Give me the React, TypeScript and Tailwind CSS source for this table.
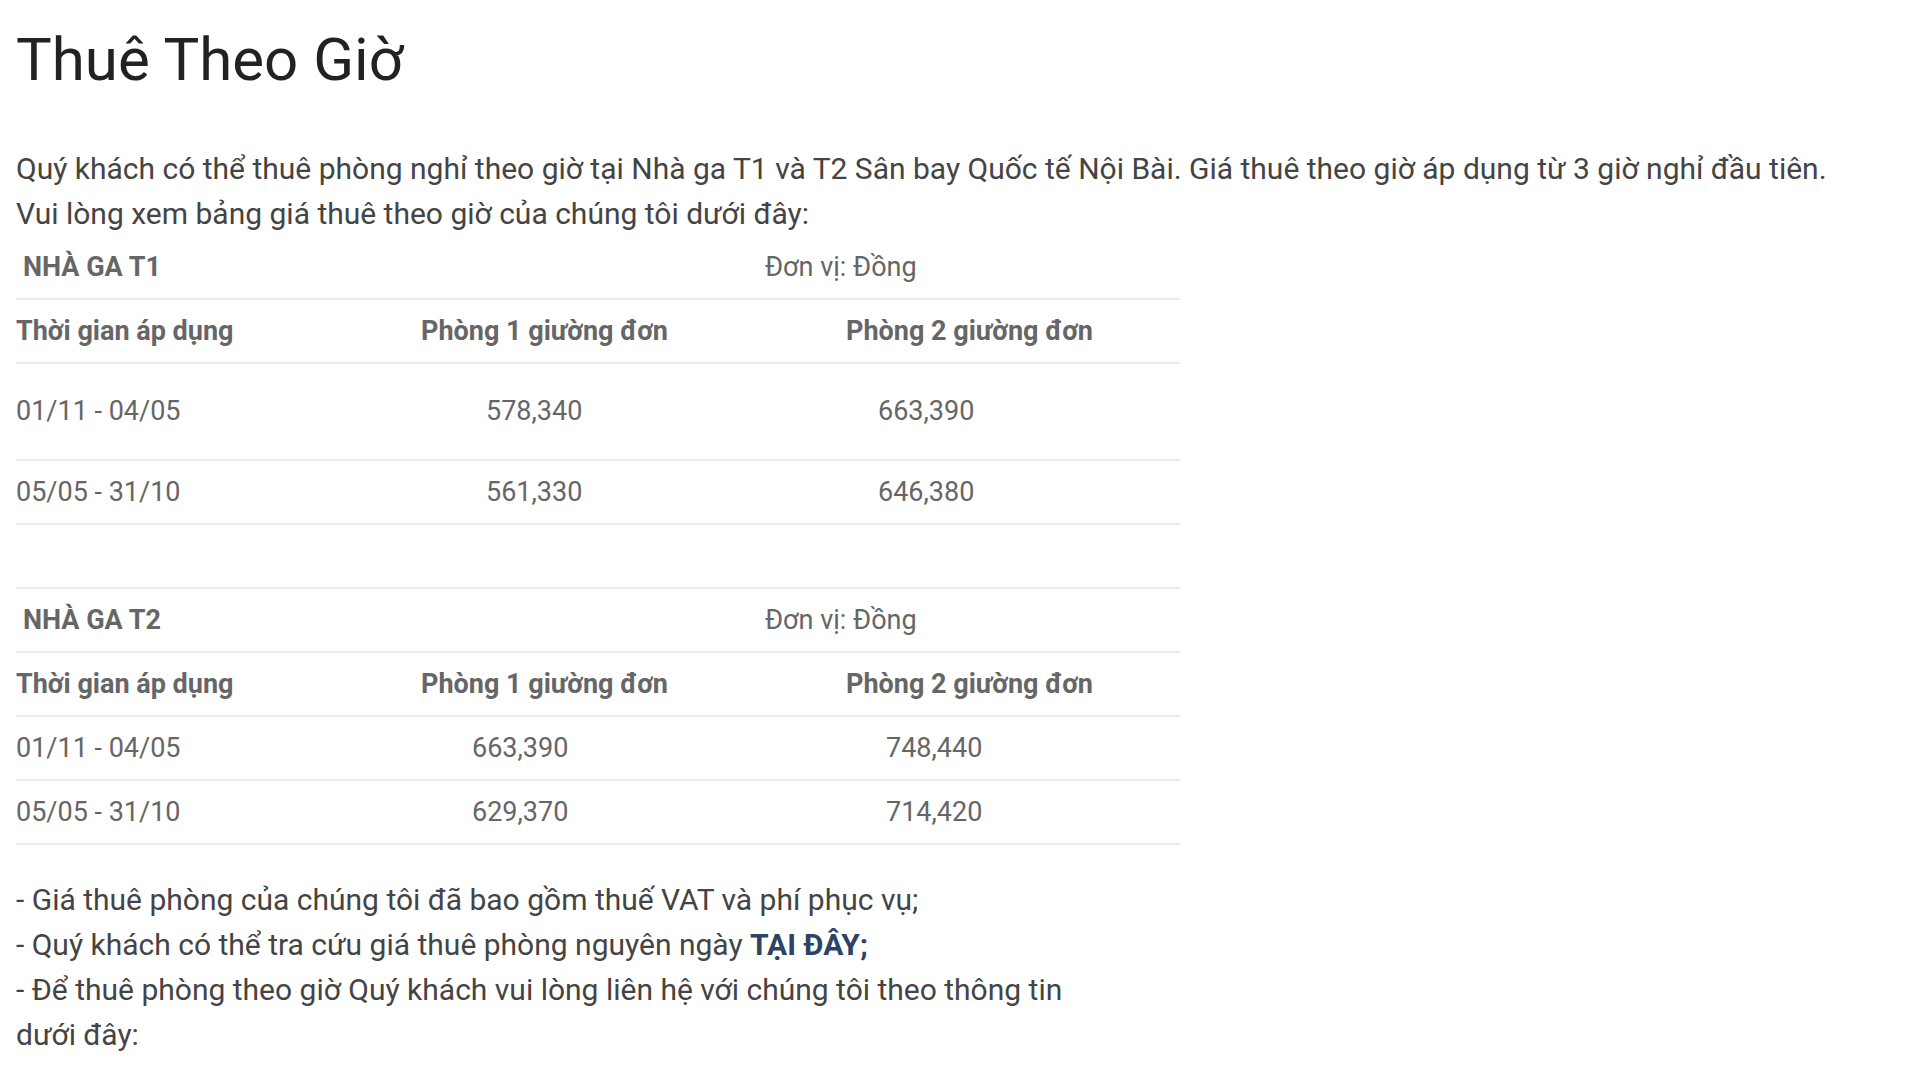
const rowLine = 'border-b-2 border-[#ebebeb]'

type PriceRow = {
  period: string
  single: string
  double: string
  singlePad: string
  doublePad: string
  height: string
}

const t1Rows: PriceRow[] = [
  { period: '01/11 - 04/05', single: '578,340', double: '663,390', singlePad: 'pl-[65px]', doublePad: 'pl-[32px]', height: 'h-[97px]' },
  { period: '05/05 - 31/10', single: '561,330', double: '646,380', singlePad: 'pl-[65px]', doublePad: 'pl-[32px]', height: 'h-[64px]' },
]

const t2Rows: PriceRow[] = [
  { period: '01/11 - 04/05', single: '663,390', double: '748,440', singlePad: 'pl-[51px]', doublePad: 'pl-[40px]', height: 'h-[64px]' },
  { period: '05/05 - 31/10', single: '629,370', double: '714,420', singlePad: 'pl-[51px]', doublePad: 'pl-[40px]', height: 'h-[64px]' },
]

function StationTable({ name, rows, spacer }: { name: string; rows: PriceRow[]; spacer?: boolean }) {
  return (
    <div className="w-[1164px] text-[27px] text-[#666]">
      <div className={`grid grid-cols-[405px_425px_334px] items-center h-[64px] ${rowLine}`}>
        <div className="pl-[7px] font-bold">{name}</div>
        <div className="col-span-2 pl-[344px] whitespace-nowrap">Đơn vị: Đồng</div>
      </div>
      <div className={`grid grid-cols-[405px_425px_334px] items-center h-[64px] font-bold ${rowLine}`}>
        <div>Thời gian áp dụng</div>
        <div>Phòng 1 giường đơn</div>
        <div>Phòng 2 giường đơn</div>
      </div>
      {rows.map((r) => (
        <div key={r.period} className={`grid grid-cols-[405px_425px_334px] items-center ${r.height} ${rowLine}`}>
          <div>{r.period}</div>
          <div className={r.singlePad}>{r.single}</div>
          <div className={r.doublePad}>{r.double}</div>
        </div>
      ))}
      {spacer && <div className={`h-[64px] ${rowLine}`} />}
    </div>
  )
}

export default function App() {
  return (
    <div className="min-h-screen bg-white pl-4 pt-[30px] font-['Roboto',sans-serif]">
      <h1 className="text-[60px] leading-none font-normal text-[#222]">Thuê Theo Giờ</h1>

      <p className="mt-[56px] text-[30px] leading-[45px] text-[#444]">
        Quý khách có thể thuê phòng nghỉ theo giờ tại Nhà ga T1 và T2 Sân bay Quốc tế Nội Bài. Giá thuê theo giờ áp dụng từ 3 giờ nghỉ đầu tiên.
        <br />
        Vui lòng xem bảng giá thuê theo giờ của chúng tôi dưới đây:
      </p>

      <StationTable name="NHÀ GA T1" rows={t1Rows} spacer />
      <StationTable name="NHÀ GA T2" rows={t2Rows} />

      <div className="mt-[32px] w-[1080px] text-[30px] leading-[45px] text-[#444]">
        <p>- Giá thuê phòng của chúng tôi đã bao gồm thuế VAT và phí phục vụ;</p>
        <p>
          - Quý khách có thể tra cứu giá thuê phòng nguyên ngày{' '}
          <a className="font-bold text-[#2d4264]">TẠI ĐÂY;</a>
        </p>
        <p>- Để thuê phòng theo giờ Quý khách vui lòng liên hệ với chúng tôi theo thông tin dưới đây:</p>
      </div>
    </div>
  )
}
